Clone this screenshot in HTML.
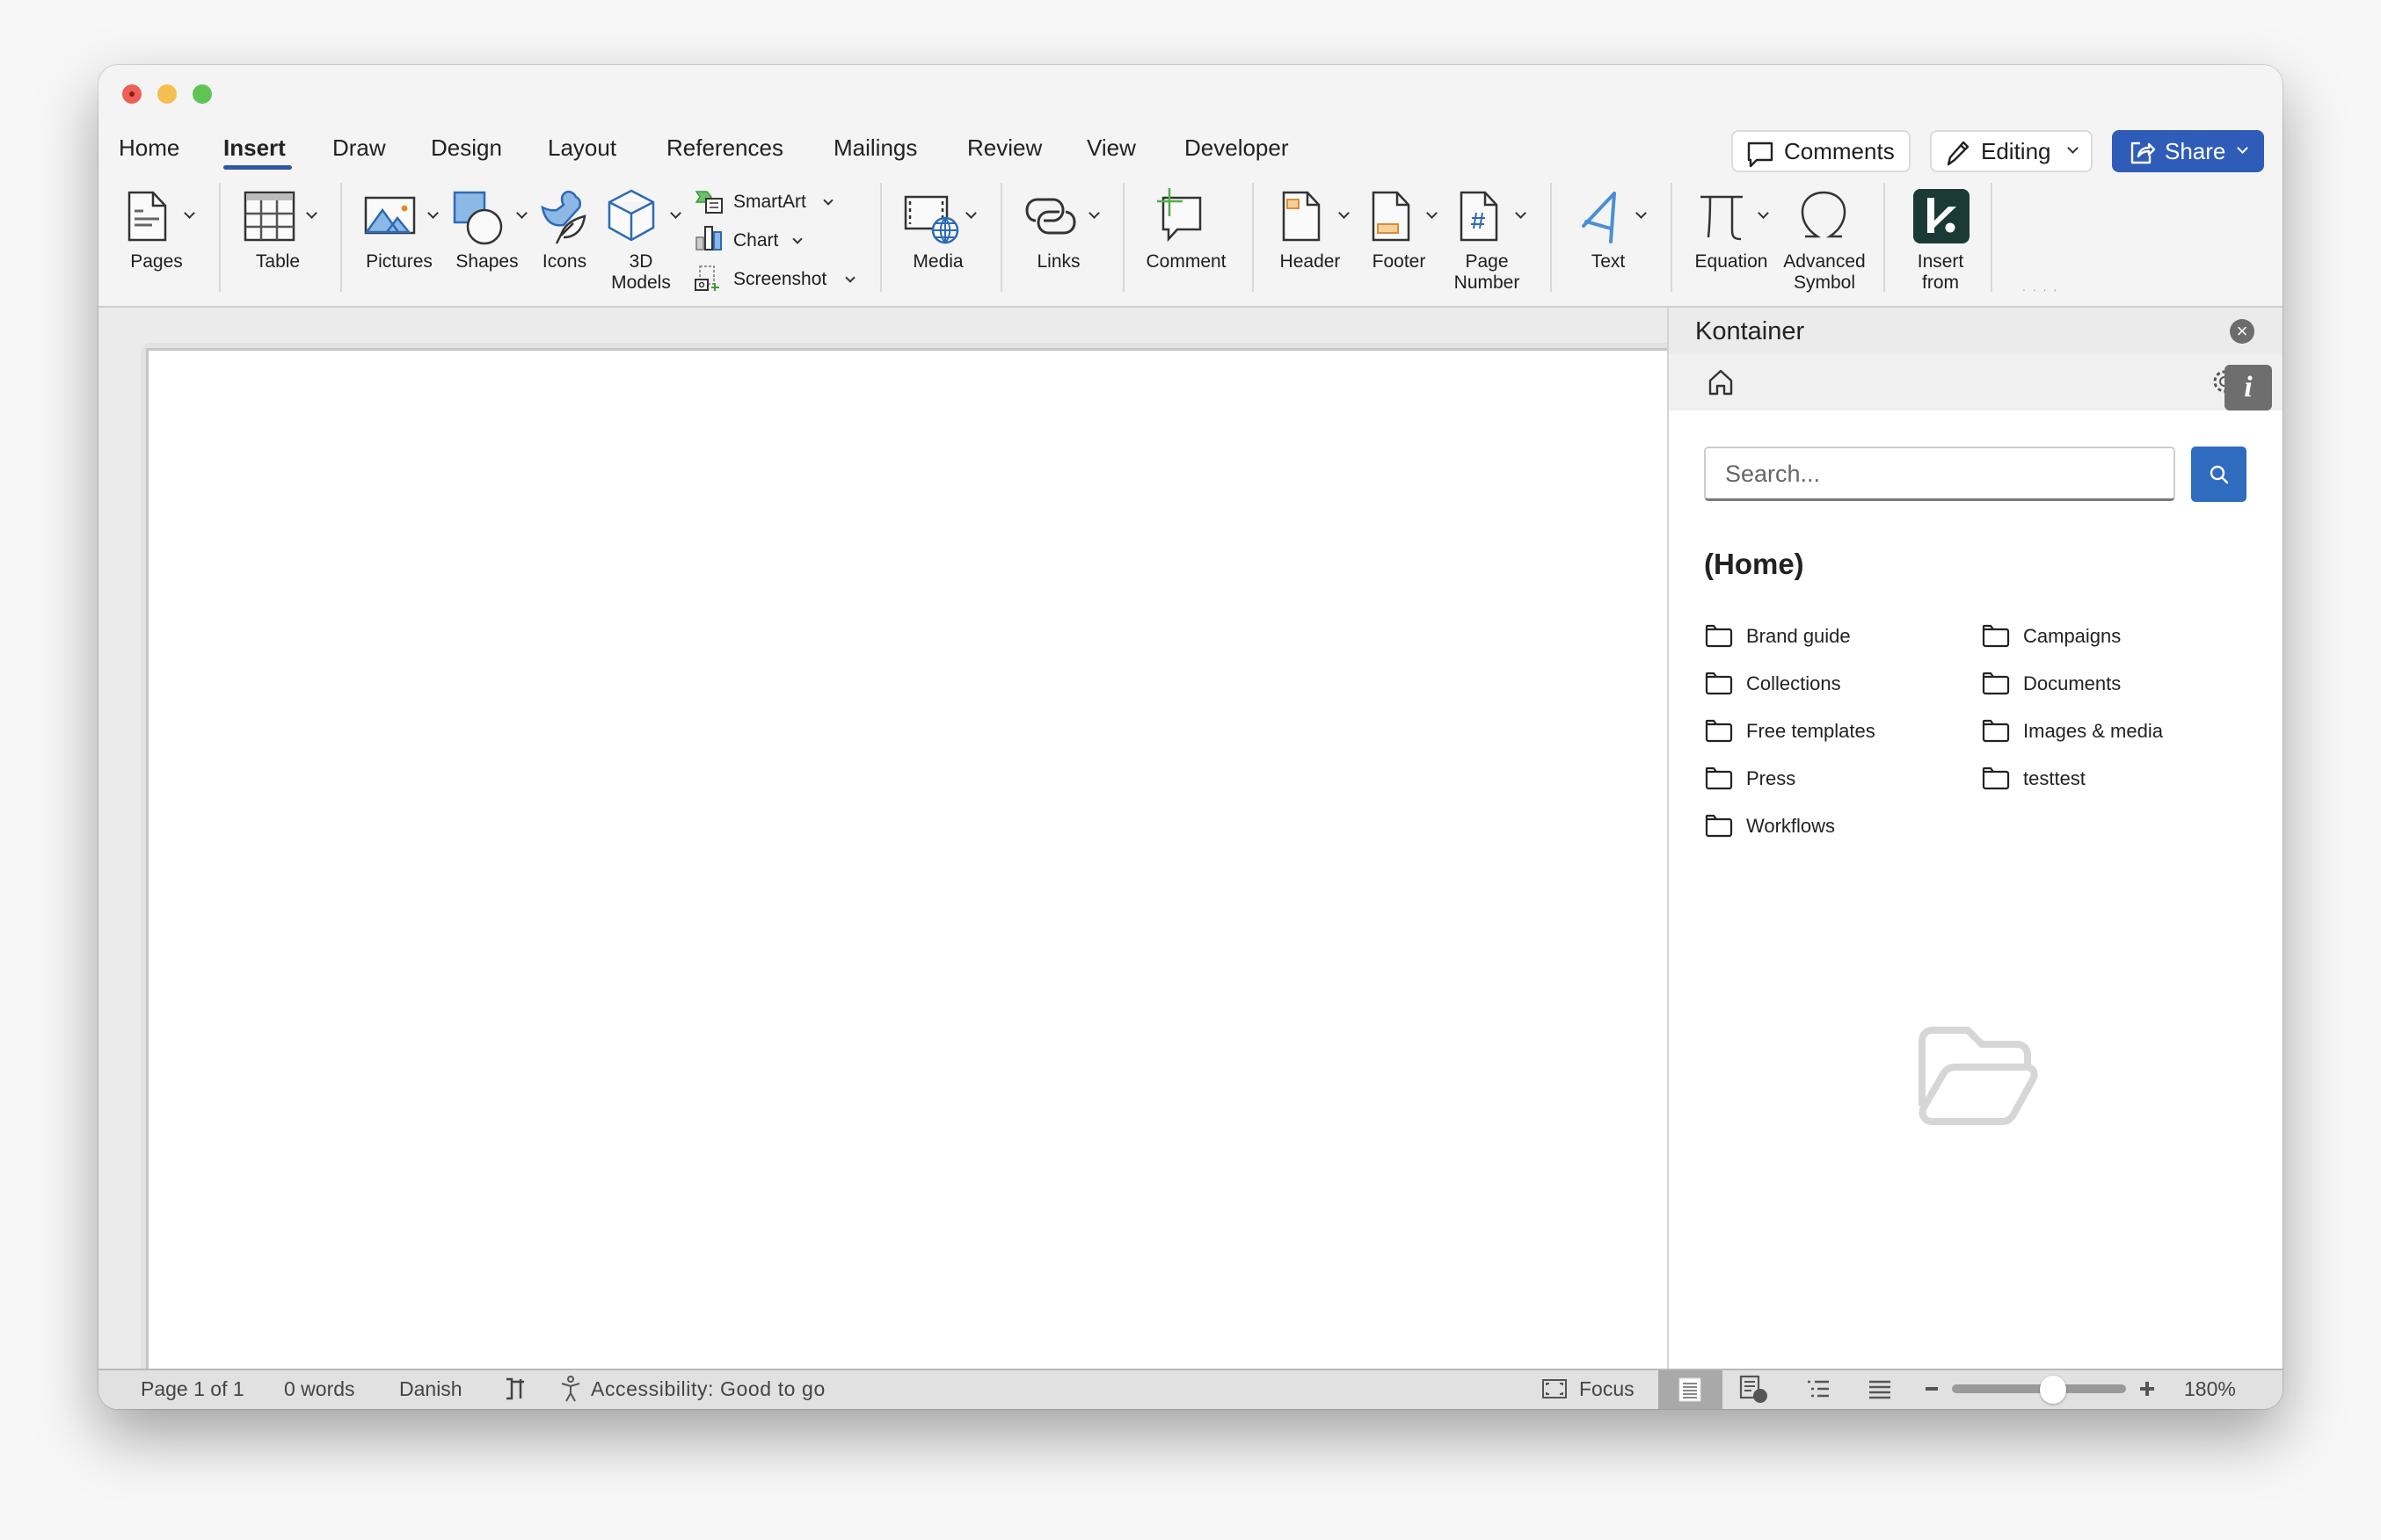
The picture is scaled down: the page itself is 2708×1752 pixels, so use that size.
<!DOCTYPE html>
<html><head><meta charset="utf-8"><style>
*{margin:0;padding:0;box-sizing:border-box}
body{width:2708px;height:1752px;background:#f7f7f7;font-family:"Liberation Sans",Helvetica,Arial,sans-serif;color:#1e1e1e;position:relative;overflow:hidden}
.win{position:absolute;left:112px;top:74px;width:2484px;height:1529px;border-radius:22px;background:#f4f4f4;overflow:hidden;box-shadow:0 30px 70px rgba(0,0,0,.35),0 0 0 1px rgba(0,0,0,.12)}
.a{position:absolute}
.tab{position:absolute;top:150px;font-size:26px;color:#222;line-height:36px}
.lbl{position:absolute;font-size:21px;line-height:24px;text-align:center;color:#1e1e1e;transform:translateX(-50%);white-space:nowrap}
.sep{position:absolute;top:208px;width:2px;height:124px;background:#d9d9d9}
.chev{position:absolute;width:9px;height:9px;border-right:2.5px solid #333;border-bottom:2.5px solid #333;transform:rotate(45deg)}
.btn{position:absolute;top:148px;height:48px;border:2px solid #dcdcdc;border-radius:8px;background:#fff;font-size:26px;line-height:44px}
.fold{position:absolute;font-size:22px;line-height:30px;color:#222}
.fold svg{position:absolute;left:-48px;top:-1px}
.st{position:absolute;top:1562px;font-size:23px;line-height:36px;color:#444}
</style></head><body>
<div class="win"></div>
<div class="a" style="left:139px;top:96px;width:22px;height:22px;border-radius:50%;background:#ee5f57"></div>
<div class="a" style="left:147px;top:104px;width:6px;height:6px;border-radius:50%;background:#8d1b14"></div>
<div class="a" style="left:179px;top:96px;width:22px;height:22px;border-radius:50%;background:#f5bf4f"></div>
<div class="a" style="left:219px;top:96px;width:22px;height:22px;border-radius:50%;background:#5fc454"></div>

<div class="tab" style="left:135px">Home</div>
<div class="tab" style="left:254px;font-weight:bold">Insert</div>
<div class="a" style="left:254px;top:188px;width:78px;height:5px;border-radius:3px;background:#2f55a4"></div>
<div class="tab" style="left:378px">Draw</div>
<div class="tab" style="left:490px">Design</div>
<div class="tab" style="left:623px">Layout</div>
<div class="tab" style="left:758px">References</div>
<div class="tab" style="left:948px">Mailings</div>
<div class="tab" style="left:1100px">Review</div>
<div class="tab" style="left:1236px">View</div>
<div class="tab" style="left:1347px">Developer</div>

<div class="btn" style="left:1969px;width:204px"><svg class="a" style="left:14px;top:10px" width="34" height="32" viewBox="0 0 34 32"><path d="M4 3h26v19H13l-7 7v-7H4z" fill="none" stroke="#222" stroke-width="2.4" stroke-linejoin="round"/></svg><span class="a" style="left:58px">Comments</span></div>
<div class="btn" style="left:2195px;width:185px"><svg class="a" style="left:14px;top:8px" width="32" height="32" viewBox="0 0 32 32"><path d="M5 29l2-8L22 4l5 5-15 15zM19 7l5 5" fill="none" stroke="#222" stroke-width="2.4" stroke-linejoin="round"/></svg><span class="a" style="left:56px">Editing</span><div class="chev" style="left:156px;top:14px"></div></div>
<div class="btn" style="left:2402px;width:173px;background:#2f5cb8;border-color:#2f5cb8;color:#fff"><svg class="a" style="left:16px;top:8px" width="32" height="32" viewBox="0 0 32 32"><path d="M14 5H5v22h20v-8M12 20c1-7 6-10 12-10V6l6 6-6 6v-4c-5 0-9 2-12 6z" fill="none" stroke="#fff" stroke-width="2.4" stroke-linejoin="round"/></svg><span class="a" style="left:58px">Share</span><div class="chev" style="left:142px;top:14px;border-color:#fff"></div></div>

<div class="sep" style="left:249px"></div><div class="sep" style="left:387px"></div><div class="sep" style="left:1001px"></div><div class="sep" style="left:1138px"></div><div class="sep" style="left:1277px"></div><div class="sep" style="left:1424px"></div><div class="sep" style="left:1763px"></div><div class="sep" style="left:1900px"></div><div class="sep" style="left:2142px"></div><div class="sep" style="left:2264px"></div>
<div class="a" style="left:2300px;top:318px;font-size:14px;color:#999;letter-spacing:2px">. . . .</div>

<svg class="a" style="left:0;top:0" width="2708" height="350" viewBox="0 0 2708 350" fill="none" stroke-width="2.5">
<path d="M147 219h27l14 15v39h-41z" fill="#fafafa" stroke="#333"/><path d="M174 219v15h14" stroke="#333"/><path d="M153 240h10M153 249h28M153 256h20" stroke="#666" stroke-width="3"/>
<rect x="279" y="219" width="55" height="54" fill="#fafafa" stroke="#333"/><rect x="280" y="220" width="53" height="8" fill="#bbb" stroke="none"/><path d="M297 228v45M315 228v45M280 243h54M280 258h54" stroke="#555"/>
<rect x="416" y="225" width="55" height="40" fill="#fafafa" stroke="#333"/><path d="M417 264l18-25 18 25zM440 264l12-16 13 16z" fill="#8cb8e6" stroke="#2d6ab5"/><circle cx="460" cy="237" r="3.5" fill="#e58b2e" stroke="none"/>
<rect x="517" y="219" width="34" height="34" fill="#8cb8e6" stroke="#2d6ab5"/><circle cx="551" cy="258" r="19" fill="#fafafa" stroke="#333"/>
<path d="M617 236c3 16 12 22 24 20l18-20c2-6 0-10-4-12-3-6-10-8-14-3-3 3-2 9 0 12l-8 6c-6 1-12-1-16-3z" fill="#8cb8e6" stroke="#2d6ab5"/><path d="M633 277l6-12c4-10 14-16 26-19-2 14-10 24-24 24M638 268l14-14" fill="#fafafa" stroke="#333"/>
<path d="M718 217l25 13v29l-25 14-25-14v-29zM693 230l25 13 25-13M718 243v30" fill="#fafafa" stroke="#2d6ab5"/>
<path d="M792 218h12l5 6-5 6h-12l4-6z" fill="#6fbf6b" stroke="#3d9a3a" stroke-width="1.5"/><rect x="803" y="226" width="18" height="16" fill="#fafafa" stroke="#333" stroke-width="2"/><path d="M807 231h10M807 236h10" stroke="#333" stroke-width="1.5"/>
<rect x="792" y="270" width="8" height="14" fill="#ccc" stroke="#777" stroke-width="1.5"/><rect x="802" y="258" width="8" height="26" fill="#fafafa" stroke="#333" stroke-width="2"/><rect x="812" y="264" width="8" height="20" fill="#8cb8e6" stroke="#2d6ab5" stroke-width="2"/>
<rect x="796" y="303" width="16" height="20" stroke="#777" stroke-width="1.5" stroke-dasharray="3 2"/><rect x="791" y="318" width="14" height="12" fill="#fafafa" stroke="#333" stroke-width="2"/><circle cx="798" cy="324" r="2.5" stroke="#333" stroke-width="1.5"/><path d="M813 322v9M809 327h9" stroke="#3d9a3a" stroke-width="2"/>
<rect x="1030" y="224" width="47" height="36" fill="#fafafa" stroke="#333"/><path d="M1035 229v26M1072 229v26" stroke="#333" stroke-dasharray="4 4"/><circle cx="1075" cy="262" r="14" fill="#fafafa" stroke="#2d6ab5"/><path d="M1061 262h28M1075 248v28M1064 254h22M1064 270h22M1075 248c-7 8-7 20 0 28c7-8 7-20 0-28" stroke="#2d6ab5" stroke-width="2"/>
<path d="M1178 251c-6 0-10-5-10-12s5-12 12-12h18c6 0 11 5 11 12 0 6-4 11-10 12h-12" stroke="#333" stroke-width="3"/>
<path d="M1212 241c6 1 10 5 10 12s-5 12-12 12h-17c-7 0-12-5-12-12s5-12 12-12h12" stroke="#333" stroke-width="3"/>
<path d="M1323 225h42v36h-26l-10 11v-11h-6z" fill="#fafafa" stroke="#333"/><path d="M1330 214v32M1316 229h29" stroke="#4fae4b" stroke-width="2.5"/>
<path d="M1460 219h27l13 14v40h-40z" fill="#fafafa" stroke="#333"/><path d="M1487 219v14h13" stroke="#333"/><rect x="1464" y="227" width="13" height="10" fill="#f3d39b" stroke="#e08a33" stroke-width="2"/>
<path d="M1562 219h27l13 14v40h-40z" fill="#fafafa" stroke="#333"/><path d="M1589 219v14h13" stroke="#333"/><rect x="1567" y="255" width="23" height="10" fill="#f3d39b" stroke="#e08a33" stroke-width="2"/>
<path d="M1662 219h27l13 14v40h-40z" fill="#fafafa" stroke="#333"/><path d="M1689 219v14h13" stroke="#333"/><path d="M1679 242l-3 18M1686 242l-3 18M1674 248h15M1673 255h15" stroke="#2d6ab5" stroke-width="2"/>
<path d="M1836 220l-35 37M1836 220l-4 55M1804 252l28 8" stroke="#4a8fd4" stroke-width="4" stroke-linecap="round"/>
<path d="M1934 224h48M1945 224c0 20-1 36-2 46M1970 224v38c0 8 3 10 10 10" stroke="#333" stroke-width="2.5"/>
<path d="M2053 269h14c-12-8-17-18-17-28c0-13 10-22 24-22s24 9 24 22c0 10-5 20-17 28h14" stroke="#333" stroke-width="2.5"/>
</svg>
<div class="a" style="left:2176px;top:215px;width:64px;height:62px;border-radius:8px;background:#1b3a36"></div>
<svg class="a" style="left:2176px;top:215px" width="64" height="62" viewBox="0 0 64 62"><path d="M16 10h8v26l16-16h9L24 44v6h-8z" fill="#fff"/><circle cx="42" cy="44" r="5.5" fill="#fff"/></svg>

<div class="chev" style="left:211px;top:238px"></div><div class="chev" style="left:350px;top:238px"></div><div class="chev" style="left:488px;top:238px"></div><div class="chev" style="left:589px;top:238px"></div><div class="chev" style="left:764px;top:238px"></div><div class="chev" style="left:1100px;top:238px"></div><div class="chev" style="left:1240px;top:238px"></div><div class="chev" style="left:1524px;top:238px"></div><div class="chev" style="left:1624px;top:238px"></div><div class="chev" style="left:1725px;top:238px"></div><div class="chev" style="left:1862px;top:238px"></div><div class="chev" style="left:2001px;top:238px"></div>
<div class="chev" style="left:938px;top:224px;width:8px;height:8px;border-width:2px"></div><div class="chev" style="left:903px;top:268px;width:8px;height:8px;border-width:2px"></div><div class="chev" style="left:963px;top:312px;width:8px;height:8px;border-width:2px"></div>
<div class="a" style="left:834px;top:218px;font-size:21px">SmartArt</div>
<div class="a" style="left:834px;top:262px;font-size:21px">Chart</div>
<div class="a" style="left:834px;top:306px;font-size:21px">Screenshot</div>

<div class="lbl" style="left:178px;top:286px">Pages</div>
<div class="lbl" style="left:316px;top:286px">Table</div>
<div class="lbl" style="left:454px;top:286px">Pictures</div>
<div class="lbl" style="left:554px;top:286px">Shapes</div>
<div class="lbl" style="left:642px;top:286px">Icons</div>
<div class="lbl" style="left:729px;top:286px">3D<br>Models</div>
<div class="lbl" style="left:1067px;top:286px">Media</div>
<div class="lbl" style="left:1204px;top:286px">Links</div>
<div class="lbl" style="left:1349px;top:286px">Comment</div>
<div class="lbl" style="left:1490px;top:286px">Header</div>
<div class="lbl" style="left:1591px;top:286px">Footer</div>
<div class="lbl" style="left:1691px;top:286px">Page<br>Number</div>
<div class="lbl" style="left:1829px;top:286px">Text</div>
<div class="lbl" style="left:1969px;top:286px">Equation</div>
<div class="lbl" style="left:2075px;top:286px">Advanced<br>Symbol</div>
<div class="lbl" style="left:2207px;top:286px">Insert<br>from</div>

<div class="a" style="left:112px;top:348px;width:1784px;height:1210px;background:#ebebeb;border-top:2px solid #cfcfcf"></div>
<div class="a" style="left:160px;top:390px;width:1736px;height:1168px;background:#e2e2e2;border-radius:12px 0 0 0"></div>
<div class="a" style="left:166px;top:396px;width:1730px;height:1162px;background:#fff;border-top:3px solid #c6c6c6;border-left:3px solid #c6c6c6"></div>

<div class="a" style="left:1896px;top:348px;width:700px;height:1210px;background:#fff;border-top:2px solid #cfcfcf;border-left:2px solid #d4d4d4"></div>
<div class="a" style="left:1898px;top:350px;width:698px;height:53px;background:#ebebeb"></div>
<div class="a" style="left:1928px;top:358px;font-size:29px;line-height:38px;color:#222">Kontainer</div>
<div class="a" style="left:2536px;top:363px;width:28px;height:28px;border-radius:50%;background:#6c6c6c;color:#fff;font-size:22px;line-height:28px;text-align:center">×</div>
<div class="a" style="left:1898px;top:403px;width:698px;height:64px;background:#f0f0f0"></div>
<svg class="a" style="left:1940px;top:418px" width="34" height="34" viewBox="0 0 34 34"><path d="M5 30V15L17 4l12 11v15h-8v-9h-8v9z" fill="none" stroke="#333" stroke-width="2.4" stroke-linejoin="round"/></svg>
<svg class="a" style="left:2514px;top:418px" width="32" height="32" viewBox="0 0 32 32"><circle cx="16" cy="16" r="5" fill="none" stroke="#555" stroke-width="2"/><circle cx="16" cy="16" r="11" fill="none" stroke="#555" stroke-width="3" stroke-dasharray="4 3"/></svg>
<div class="a" style="left:2530px;top:415px;width:54px;height:52px;border-radius:6px;background:#6e6e6e;color:#fff;font-family:'Liberation Serif',serif;font-style:italic;font-weight:bold;font-size:34px;line-height:52px;text-align:center">i</div>

<div class="a" style="left:1938px;top:508px;width:536px;height:62px;border:2px solid #cdcdcd;border-bottom:3px solid #777;border-radius:5px;background:#fff"></div>
<div class="a" style="left:1962px;top:522px;font-size:27px;line-height:34px;color:#666">Search...</div>
<div class="a" style="left:2492px;top:508px;width:63px;height:63px;border-radius:5px;background:#2f6bbf"></div>
<svg class="a" style="left:2511px;top:527px" width="26" height="26" viewBox="0 0 26 26"><circle cx="11" cy="11" r="7" fill="none" stroke="#fff" stroke-width="2.4"/><path d="M16 16l6 6" stroke="#fff" stroke-width="2.4" stroke-linecap="round"/></svg>
<div class="a" style="left:1938px;top:622px;font-size:33px;line-height:40px;font-weight:bold;color:#222">(Home)</div>

<div class="fold" style="left:1986px;top:709px"><svg width="34" height="30" viewBox="0 0 34 30"><path d="M3 5v20c0 1 1 2 2 2h24c1 0 2-1 2-2V10c0-1-1-2-2-2H14l-3-4H4c-1 0-1 0-1 1zM3 8h10" fill="none" stroke="#222" stroke-width="2.2"/></svg>Brand guide</div>
<div class="fold" style="left:1986px;top:763px"><svg width="34" height="30" viewBox="0 0 34 30"><path d="M3 5v20c0 1 1 2 2 2h24c1 0 2-1 2-2V10c0-1-1-2-2-2H14l-3-4H4c-1 0-1 0-1 1zM3 8h10" fill="none" stroke="#222" stroke-width="2.2"/></svg>Collections</div>
<div class="fold" style="left:1986px;top:817px"><svg width="34" height="30" viewBox="0 0 34 30"><path d="M3 5v20c0 1 1 2 2 2h24c1 0 2-1 2-2V10c0-1-1-2-2-2H14l-3-4H4c-1 0-1 0-1 1zM3 8h10" fill="none" stroke="#222" stroke-width="2.2"/></svg>Free templates</div>
<div class="fold" style="left:1986px;top:871px"><svg width="34" height="30" viewBox="0 0 34 30"><path d="M3 5v20c0 1 1 2 2 2h24c1 0 2-1 2-2V10c0-1-1-2-2-2H14l-3-4H4c-1 0-1 0-1 1zM3 8h10" fill="none" stroke="#222" stroke-width="2.2"/></svg>Press</div>
<div class="fold" style="left:1986px;top:925px"><svg width="34" height="30" viewBox="0 0 34 30"><path d="M3 5v20c0 1 1 2 2 2h24c1 0 2-1 2-2V10c0-1-1-2-2-2H14l-3-4H4c-1 0-1 0-1 1zM3 8h10" fill="none" stroke="#222" stroke-width="2.2"/></svg>Workflows</div>
<div class="fold" style="left:2301px;top:709px"><svg width="34" height="30" viewBox="0 0 34 30"><path d="M3 5v20c0 1 1 2 2 2h24c1 0 2-1 2-2V10c0-1-1-2-2-2H14l-3-4H4c-1 0-1 0-1 1zM3 8h10" fill="none" stroke="#222" stroke-width="2.2"/></svg>Campaigns</div>
<div class="fold" style="left:2301px;top:763px"><svg width="34" height="30" viewBox="0 0 34 30"><path d="M3 5v20c0 1 1 2 2 2h24c1 0 2-1 2-2V10c0-1-1-2-2-2H14l-3-4H4c-1 0-1 0-1 1zM3 8h10" fill="none" stroke="#222" stroke-width="2.2"/></svg>Documents</div>
<div class="fold" style="left:2301px;top:817px"><svg width="34" height="30" viewBox="0 0 34 30"><path d="M3 5v20c0 1 1 2 2 2h24c1 0 2-1 2-2V10c0-1-1-2-2-2H14l-3-4H4c-1 0-1 0-1 1zM3 8h10" fill="none" stroke="#222" stroke-width="2.2"/></svg>Images &amp; media</div>
<div class="fold" style="left:2301px;top:871px"><svg width="34" height="30" viewBox="0 0 34 30"><path d="M3 5v20c0 1 1 2 2 2h24c1 0 2-1 2-2V10c0-1-1-2-2-2H14l-3-4H4c-1 0-1 0-1 1zM3 8h10" fill="none" stroke="#222" stroke-width="2.2"/></svg>testtest</div>

<svg class="a" style="left:2180px;top:1160px" width="142" height="122" viewBox="0 0 142 122"><path d="M6 98V24c0-7 5-12 12-12h40l16 16h40c7 0 12 5 12 12v12M8 100l22-38c3-5 7-8 14-8h80c8 0 12 6 8 14l-22 40c-3 5-7 8-13 8H18c-9 0-14-8-10-16z" fill="none" stroke="#d6d6d6" stroke-width="8" stroke-linejoin="round"/></svg>

<div class="a" style="left:112px;top:1557px;width:2484px;height:46px;background:#e1e1e1;border-top:2px solid #b9b9b9;border-radius:0 0 22px 22px"></div>
<div class="st" style="left:160px">Page 1 of 1</div>
<div class="st" style="left:323px">0 words</div>
<div class="st" style="left:454px">Danish</div>
<svg class="a" style="left:572px;top:1566px" width="28" height="28" viewBox="0 0 28 28"><path d="M4 3h6v22H4M10 6h14M20 3v22" fill="none" stroke="#444" stroke-width="2.5"/></svg>
<svg class="a" style="left:634px;top:1564px" width="30" height="32" viewBox="0 0 30 32"><circle cx="15" cy="5" r="3" fill="none" stroke="#555" stroke-width="2"/><path d="M5 10l10 3 10-3M15 13v8l-5 9M15 21l5 9" fill="none" stroke="#555" stroke-width="2"/></svg>
<div class="st" style="left:672px;letter-spacing:0.6px">Accessibility: Good to go</div>
<svg class="a" style="left:1753px;top:1568px" width="30" height="24" viewBox="0 0 30 24"><rect x="2" y="2" width="26" height="20" fill="none" stroke="#555" stroke-width="2"/><path d="M6 8V6h3M24 8V6h-3M6 16v2h3M24 16v2h-3" stroke="#555" stroke-width="2" fill="none"/></svg>
<div class="st" style="left:1796px">Focus</div>
<div class="a" style="left:1886px;top:1559px;width:73px;height:44px;background:#a9a9a9"></div>
<svg class="a" style="left:1908px;top:1566px" width="28" height="30" viewBox="0 0 28 30"><rect x="2" y="2" width="24" height="26" fill="#fff" stroke="#ddd" stroke-width="1"/><path d="M6 8h16M6 12h16M6 16h16M6 20h16M6 24h16" stroke="#888" stroke-width="2"/></svg>
<svg class="a" style="left:1978px;top:1564px" width="36" height="34" viewBox="0 0 36 34"><rect x="2" y="2" width="20" height="24" fill="none" stroke="#555" stroke-width="2.2"/><path d="M6 8h12M6 13h12M6 18h8" stroke="#555" stroke-width="2"/><circle cx="24" cy="24" r="8" fill="#555"/></svg>
<svg class="a" style="left:2054px;top:1568px" width="28" height="26" viewBox="0 0 28 26"><path d="M2 4h3M10 4h16M6 12h3M13 12h13M6 20h3M13 20h13" stroke="#555" stroke-width="2.5"/></svg>
<svg class="a" style="left:2124px;top:1568px" width="28" height="26" viewBox="0 0 28 26"><path d="M2 4h24M2 10h24M2 16h24M2 22h24" stroke="#555" stroke-width="2.5"/></svg>
<div class="a" style="left:2190px;top:1578px;width:14px;height:4px;background:#555"></div>
<div class="a" style="left:2220px;top:1575px;width:198px;height:10px;border-radius:5px;background:#9a9a9a"></div>
<div class="a" style="left:2320px;top:1565px;width:30px;height:32px;border-radius:50%;background:#fff;box-shadow:0 1px 3px rgba(0,0,0,.3)"></div>
<div class="a" style="left:2434px;top:1578px;width:16px;height:4px;background:#555"></div>
<div class="a" style="left:2440px;top:1572px;width:4px;height:16px;background:#555"></div>
<div class="st" style="left:2484px">180%</div>
</body></html>
